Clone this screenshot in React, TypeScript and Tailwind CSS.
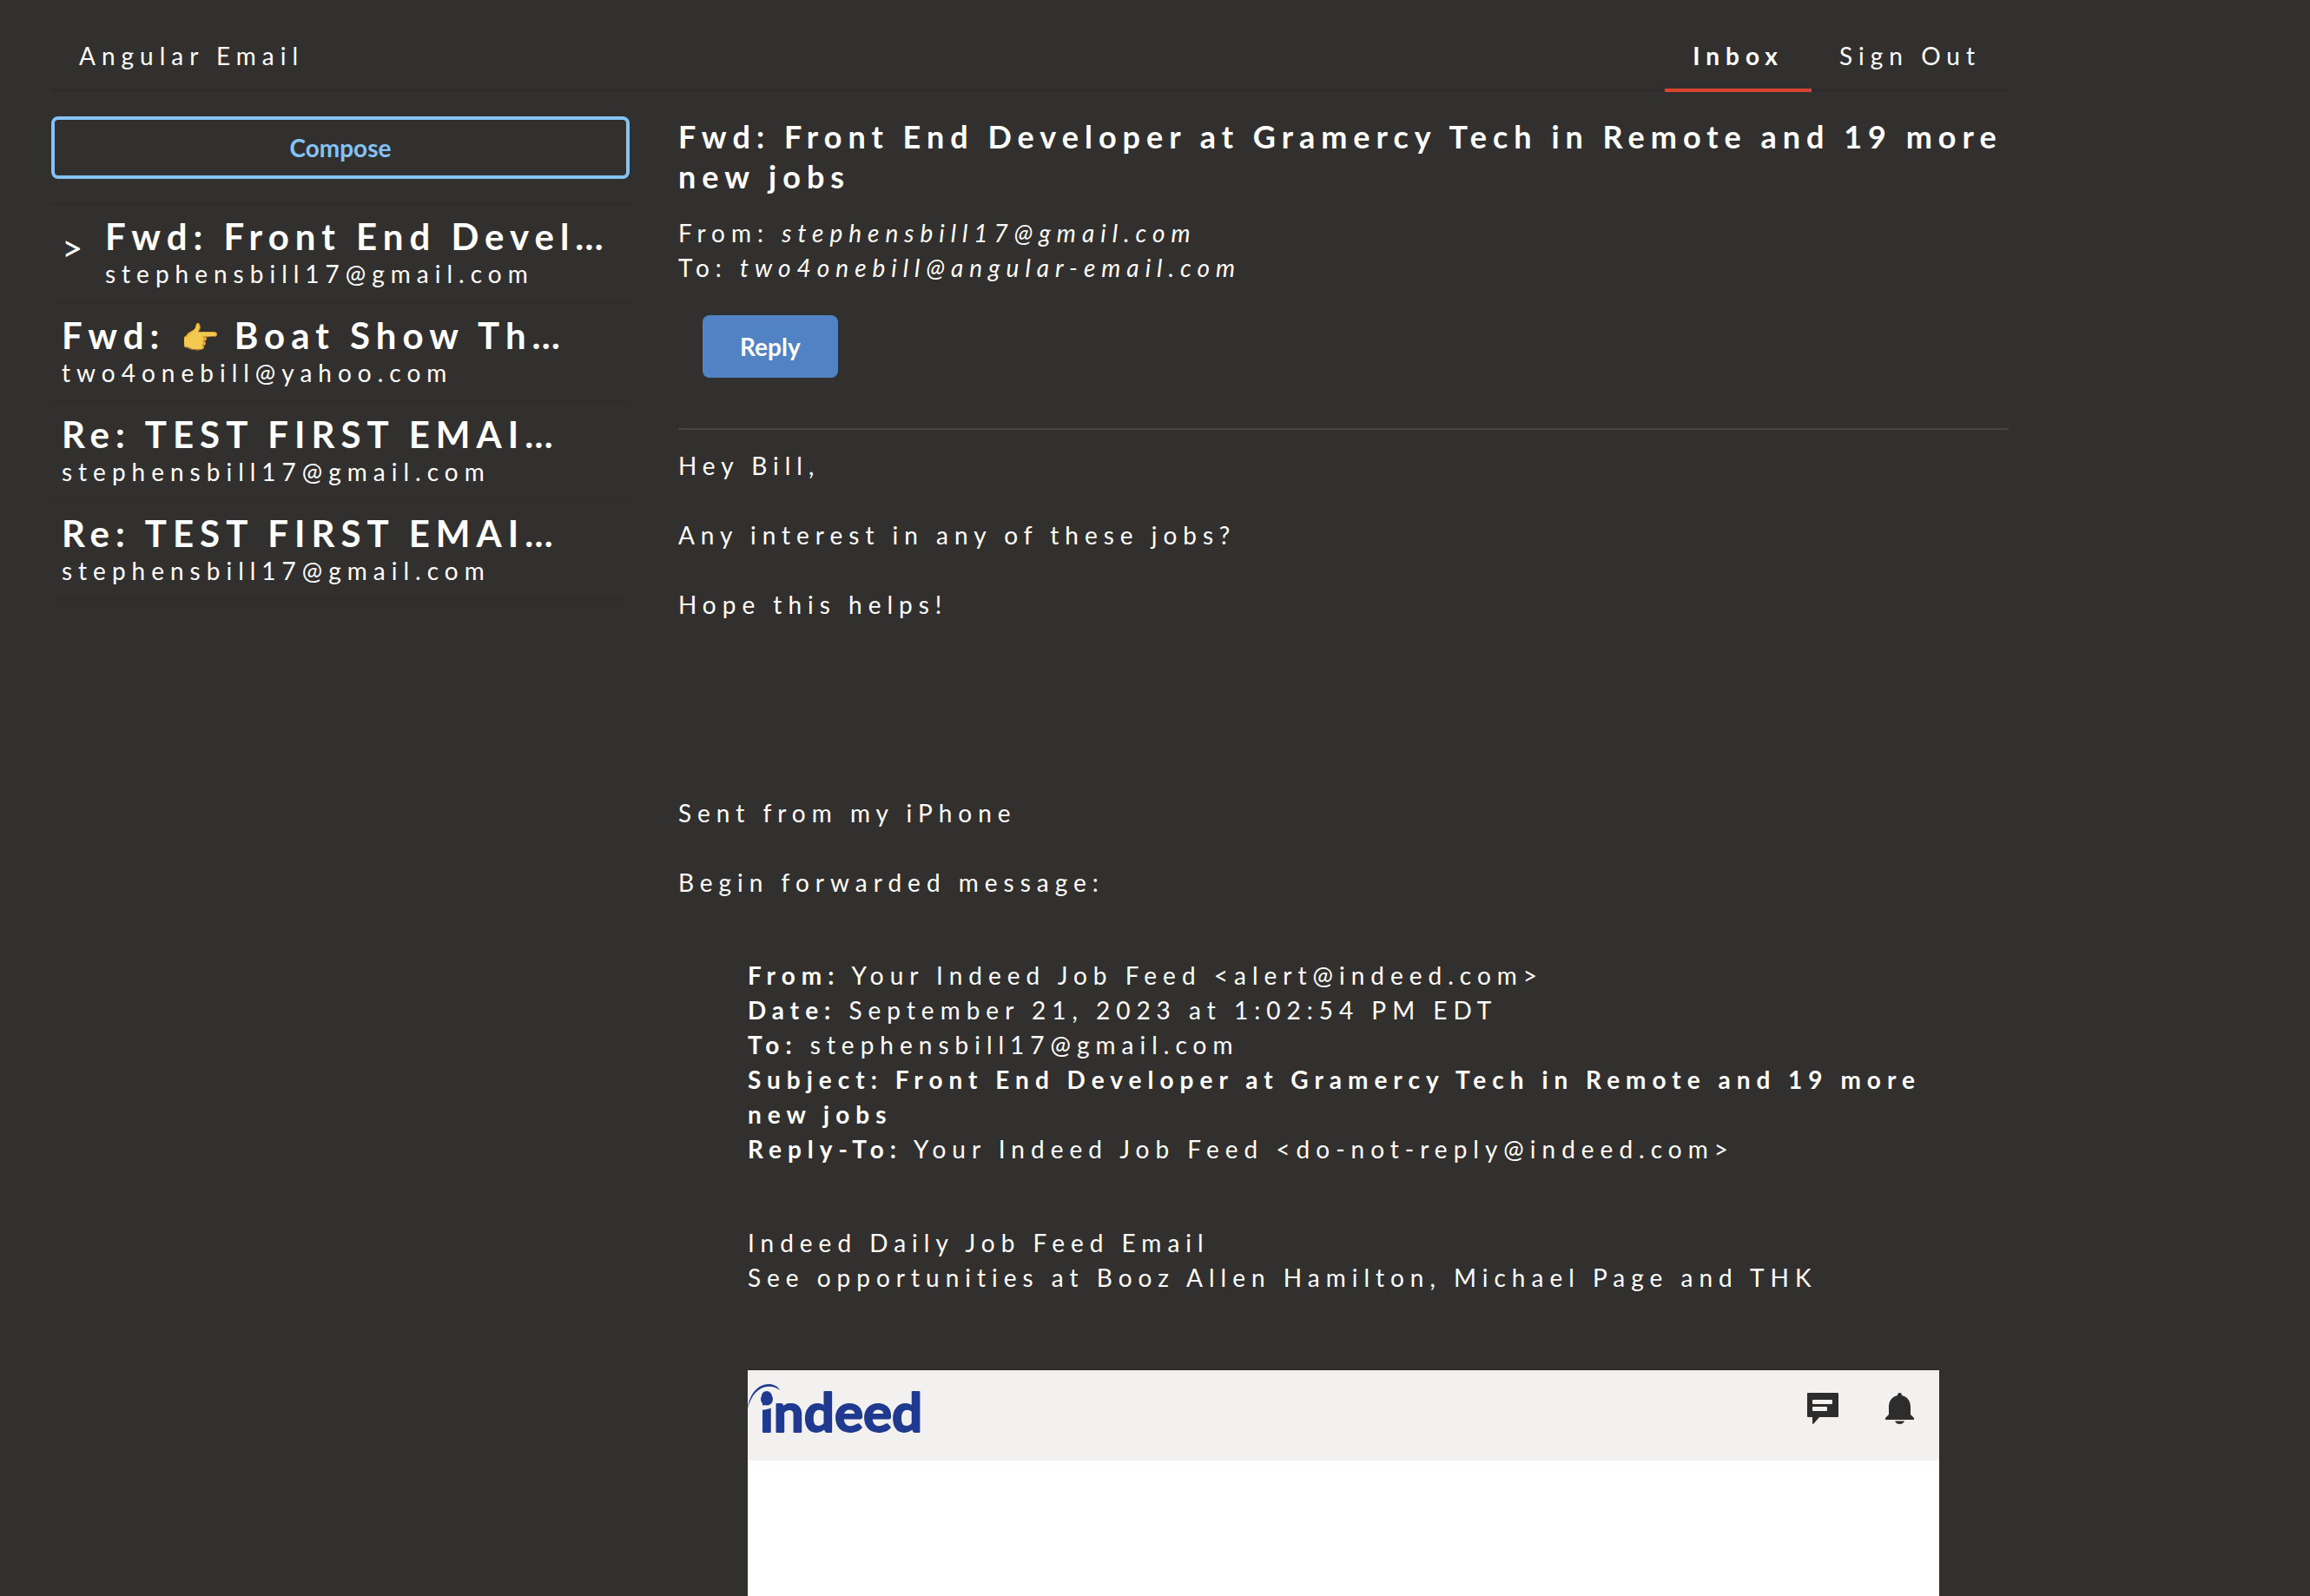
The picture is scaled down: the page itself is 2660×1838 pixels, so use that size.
type Email = { subject: string; emoji?: string; rest?: string; from: string; selected?: boolean };

const emails: Email[] = [
  { subject: "Fwd: Front End Devel…", from: "stephensbill17@gmail.com", selected: true },
  { subject: "Fwd: ", emoji: "👉", rest: " Boat Show Th…", from: "two4onebill@yahoo.com" },
  { subject: "Re: TEST FIRST EMAI…", from: "stephensbill17@gmail.com" },
  { subject: "Re: TEST FIRST EMAI…", from: "stephensbill17@gmail.com" },
];

function NavBar() {
  return (
    <nav className="flex border-b-4 border-[#2f2c2d] pt-[26px] leading-7">
      <a href="#" className="px-8 py-6">
        Angular Email
      </a>
      <div className="-mb-1 ml-auto flex">
        <a href="#inbox" className="border-b-4 border-[#db4331] px-8 py-6 font-bold">
          Inbox
        </a>
        <a href="#signout" className="px-8 py-6">
          Sign Out
        </a>
      </div>
    </nav>
  );
}

function EmailRow({ email }: { email: Email }) {
  return (
    <li className="border-t-2 border-[#2f2d2c]">
      <a href="#email" className="flex items-center px-3 pt-3 pb-[14px]">
        {email.selected && <span className="w-[50px] shrink-0 pb-3 text-[42px] leading-10 tracking-normal">&gt;</span>}
        <div className="min-w-0">
          <h3 className="truncate text-[42px] leading-[48px] font-bold">
            {email.subject}
            {email.emoji && (
              <span className="inline-block text-4xl leading-10 tracking-normal saturate-75">{email.emoji}</span>
            )}
            {email.rest}
          </h3>
          <p className="leading-[38px]">{email.from}</p>
        </div>
      </a>
    </li>
  );
}

function IndeedLogo() {
  return (
    <svg width="220" height="84" viewBox="0 -8 220 84" role="img" aria-label="indeed">
      <text
        x="14"
        y="59"
        fill="#1f3a8f"
        stroke="#1f3a8f"
        strokeWidth="2"
        strokeLinejoin="round"
        className="font-['Lato',sans-serif] text-[62px] font-bold tracking-normal"
      >
        indeed
      </text>
      <path d="M12 31 Q22 32 31 27" fill="none" stroke="#f3f1f0" strokeWidth="5" />
      <circle cx="22" cy="21.500" r="7" fill="#1f3a8f" />
      <path d="M0 32 C2 15 12 4 24 4 C30 4 34 6 37 11 C33 8 29 6.500 24 6.700 C13 7 4 16 0 32 Z" fill="#1f3a8f" />
    </svg>
  );
}

function MessageIcon() {
  return (
    <svg width="36" height="36" viewBox="0 0 36 36" aria-hidden="true">
      <path d="M1 0H35Q36 0 36 1V27Q36 28 35 28H14L7.500 35.500Q6 36.500 6 35V28H1Q0 28 0 27V1Q0 0 1 0Z" fill="#2d2d2d" />
      <rect x="6" y="8" width="23" height="5" rx="1" fill="#f3f1f0" />
      <rect x="6" y="16" width="17" height="5" rx="1" fill="#f3f1f0" />
    </svg>
  );
}

function BellIcon() {
  return (
    <svg width="34" height="36" viewBox="0 0 34 36" aria-hidden="true">
      <path
        d="M14 3Q14 0 16.500 0Q19 0 19 3C25.500 4.500 29 9.500 29 16V25L33 29V31H0V29L4 25V16C4 9.500 7.500 4.500 14 3Z"
        fill="#2d2d2d"
      />
      <path d="M11 32.500H22Q20.500 36 16.500 36Q12.500 36 11 32.500Z" fill="#2d2d2d" />
    </svg>
  );
}

export default function App() {
  return (
    <div className="h-screen overflow-hidden bg-[#32302e] pl-[59px] font-['Lato',sans-serif] text-[28px] leading-10 tracking-[7px] text-white">
      <div className="flex h-full max-w-[2254px] flex-col">
        <NavBar />
        <div className="mt-7 grid min-h-0 flex-1 grid-cols-16 gap-14">
          <aside className="col-span-5">
            <button
              type="button"
              className="h-[72px] w-full rounded-lg border-4 border-[#85c3f7] font-bold tracking-normal text-[#85c3f7]"
            >
              Compose
            </button>
            <ul className="mt-7 border-b-2 border-[#2f2d2c]">
              {emails.map((email, i) => (
                <EmailRow key={i} email={email} />
              ))}
            </ul>
          </aside>

          <main className="col-span-11 flex flex-col">
            <h1 className="text-4xl leading-[46px] font-bold">
              Fwd: Front End Developer at Gramercy Tech in Remote and 19 more new jobs
            </h1>
            <div className="mt-[22px]">
              <p>
                From: <i>stephensbill17@gmail.com</i>
              </p>
              <p>
                To: <i>two4onebill@angular-email.com</i>
              </p>
            </div>
            <button
              type="button"
              className="mt-[35px] ml-7 h-[72px] w-[156px] shrink-0 rounded-lg bg-[#5182c4] font-bold tracking-normal"
            >
              Reply
            </button>
            <hr className="mt-[58px] border-t-2 border-[#464543]" />

            <div className="mt-[21px]">
              <p>Hey Bill,</p>
              <p className="mt-10">Any interest in any of these jobs?</p>
              <p className="mt-10">Hope this helps!</p>
              <p className="mt-[200px]">Sent from my iPhone</p>
              <p className="mt-10">Begin forwarded message:</p>
            </div>

            <blockquote className="mx-20 mt-[67px] flex flex-1 flex-col">
              <p>
                <b>From:</b> Your Indeed Job Feed &lt;alert@indeed.com&gt;
              </p>
              <p>
                <b>Date:</b> September 21, 2023 at 1:02:54 PM EDT
              </p>
              <p>
                <b>To:</b> stephensbill17@gmail.com
              </p>
              <p className="font-bold">
                Subject: Front End Developer at Gramercy Tech in Remote and 19 more new jobs
              </p>
              <p>
                <b>Reply-To:</b> Your Indeed Job Feed &lt;do-not-reply@indeed.com&gt;
              </p>
              <p className="mt-[68px]">Indeed Daily Job Feed Email</p>
              <p>See opportunities at Booz Allen Hamilton, Michael Page and THK</p>

              <section className="mt-[87px] flex-1 bg-white">
                <header className="flex h-[104px] items-start justify-between bg-[#f3f1f0] pt-1 pr-7">
                  <IndeedLogo />
                  <div className="flex gap-[54px] pt-[22px]">
                    <MessageIcon />
                    <BellIcon />
                  </div>
                </header>
              </section>
            </blockquote>
          </main>
        </div>
      </div>
    </div>
  );
}
